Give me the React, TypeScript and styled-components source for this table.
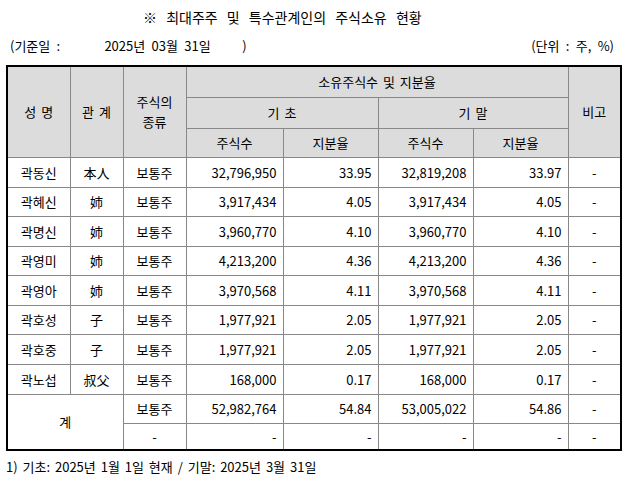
import React from "react";
import styled, { createGlobalStyle } from "styled-components";

const Global = createGlobalStyle`
  html, body { margin: 0; padding: 0; background: #fff; }
  body { font-family: "Noto Sans CJK KR", "Noto Sans", sans-serif; color: #000; }
`;

const Page = styled.div`
  width: 623px;
  padding: 6px 0 0 6px;
  box-sizing: border-box;
  font-size: 13px;
`;

const Title = styled.div`
  height: 22px;
  line-height: 22px;
  padding-left: 137px;
  font-size: 14px;
  word-spacing: 6px;
`;

const InfoBar = styled.div`
  display: flex;
  justify-content: space-between;
  width: 608px;
  height: 28px;
  line-height: 36px;
  padding-left: 4px;
  box-sizing: border-box;
  margin-bottom: 9px;
  word-spacing: 3.4px;
`;

const Pre = styled.span`
  white-space: pre;
`;

const Table = styled.table`
  border-collapse: collapse;
  table-layout: fixed;
  border: 2px solid #000;
  width: 614px;
`;

const Row = styled.tr<{ $h: number }>`
  height: ${(p) => p.$h}px;
`;

const Cell = styled.td<{ $align?: "left" | "right" | "center"; $head?: boolean; $tall?: boolean }>`
  border: 1px solid #888;
  padding: 0 ${(p) => (p.$align === "right" ? "6px" : "2px")} 0 2px;
  text-align: ${(p) => p.$align ?? "center"};
  background: ${(p) => (p.$head ? "#dcdcdc" : "#fff")};
  vertical-align: middle;
  white-space: nowrap;
  line-height: ${(p) => (p.$tall ? "20px" : "17px")};
  font-size: 13px;
  word-spacing: 2px;
`;

const Foot = styled.div`
  margin-top: 5px;
  height: 22px;
  line-height: 22px;
  font-size: 13px;
  word-spacing: 2px;
`;

type R = { name: string; rel: string; s1: string; p1: string; s2: string; p2: string };

const rows: R[] = [
  { name: "곽동신", rel: "本人", s1: "32,796,950", p1: "33.95", s2: "32,819,208", p2: "33.97" },
  { name: "곽혜신", rel: "姉", s1: "3,917,434", p1: "4.05", s2: "3,917,434", p2: "4.05" },
  { name: "곽명신", rel: "姉", s1: "3,960,770", p1: "4.10", s2: "3,960,770", p2: "4.10" },
  { name: "곽영미", rel: "姉", s1: "4,213,200", p1: "4.36", s2: "4,213,200", p2: "4.36" },
  { name: "곽영아", rel: "姉", s1: "3,970,568", p1: "4.11", s2: "3,970,568", p2: "4.11" },
  { name: "곽호성", rel: "子", s1: "1,977,921", p1: "2.05", s2: "1,977,921", p2: "2.05" },
  { name: "곽호중", rel: "子", s1: "1,977,921", p1: "2.05", s2: "1,977,921", p2: "2.05" },
  { name: "곽노섭", rel: "叔父", s1: "168,000", p1: "0.17", s2: "168,000", p2: "0.17" },
];

const rowHeights = [30, 29, 30, 29, 30, 29, 30, 30];
const colWidths = [63, 53, 63, 97, 95, 95, 95, 53];

export default function App() {
  return (
    <Page>
      <Global />
      <Title>※ 최대주주 및 특수관계인의 주식소유 현황</Title>
      <InfoBar>
        <Pre>(기준일 :       2025년 03월 31일     )</Pre>
        <span>(단위 : 주, %)</span>
      </InfoBar>
      <Table>
        <colgroup>
          {colWidths.map((w, i) => (
            <col key={i} style={{ width: w }} />
          ))}
        </colgroup>
        <thead>
          <Row $h={31}>
            <Cell $head rowSpan={3}>성 명</Cell>
            <Cell $head rowSpan={3}>관 계</Cell>
            <Cell $head $tall rowSpan={3}>주식의<br />종류</Cell>
            <Cell $head colSpan={4}>소유주식수 및 지분율</Cell>
            <Cell $head rowSpan={3}>비고</Cell>
          </Row>
          <Row $h={31}>
            <Cell $head colSpan={2}>기 초</Cell>
            <Cell $head colSpan={2}>기 말</Cell>
          </Row>
          <Row $h={29}>
            <Cell $head>주식수</Cell>
            <Cell $head>지분율</Cell>
            <Cell $head>주식수</Cell>
            <Cell $head>지분율</Cell>
          </Row>
        </thead>
        <tbody>
          {rows.map((r, i) => (
            <Row $h={rowHeights[i]} key={r.name}>
              <Cell>{r.name}</Cell>
              <Cell>{r.rel}</Cell>
              <Cell>보통주</Cell>
              <Cell $align="right">{r.s1}</Cell>
              <Cell $align="right">{r.p1}</Cell>
              <Cell $align="right">{r.s2}</Cell>
              <Cell $align="right">{r.p2}</Cell>
              <Cell>-</Cell>
            </Row>
          ))}
          <Row $h={29}>
            <Cell colSpan={2} rowSpan={2}>계</Cell>
            <Cell>보통주</Cell>
            <Cell $align="right">52,982,764</Cell>
            <Cell $align="right">54.84</Cell>
            <Cell $align="right">53,005,022</Cell>
            <Cell $align="right">54.86</Cell>
            <Cell>-</Cell>
          </Row>
          <Row $h={27}>
            <Cell>-</Cell>
            <Cell $align="right">-</Cell>
            <Cell $align="right">-</Cell>
            <Cell $align="right">-</Cell>
            <Cell $align="right">-</Cell>
            <Cell>-</Cell>
          </Row>
        </tbody>
      </Table>
      <Foot>1) 기초: 2025년 1월 1일 현재 / 기말: 2025년 3월 31일</Foot>
    </Page>
  );
}
